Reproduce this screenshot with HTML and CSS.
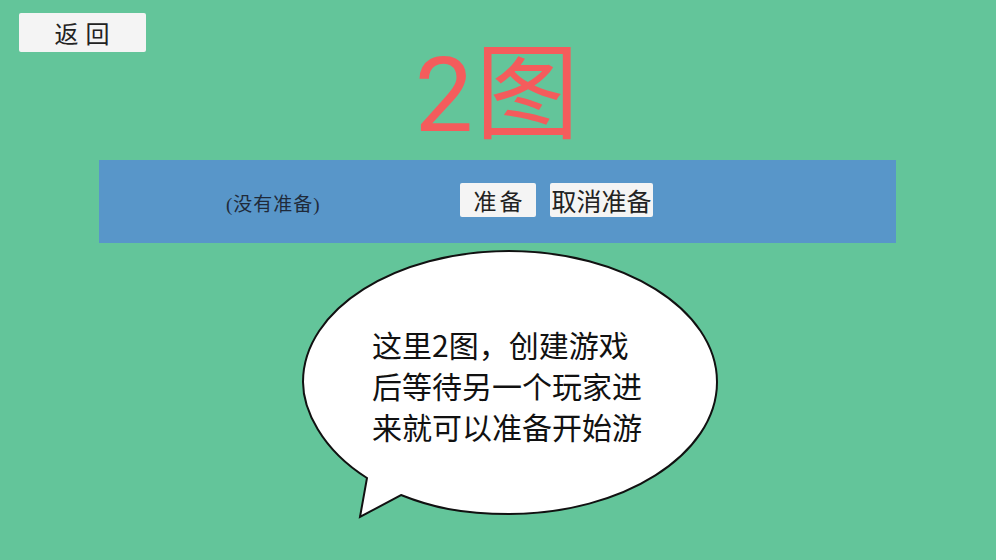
FILE: index.html
```html
<!DOCTYPE html>
<html lang="zh">
<head>
<meta charset="utf-8">
<link rel="stylesheet" href="styles.css">
</head>
<body>
<div class="page">
  <div class="topbar"><button class="back">返回</button></div>
  <h1 class="title">2图</h1>
  <div class="bar">
    <span class="status">(没有准备)</span>
    <button class="btn ready">准备</button>
    <button class="btn cancel">取消准备</button>
  </div>
  <div class="bubble-wrap">
    <svg class="bubble" width="430" height="280" viewBox="0 0 430 280">
      <path d="M66 229 C 20 200, 2 160, 2 133 C 2 60, 95 2, 208 2 C 321 2, 416 60, 416 133 C 416 206, 321 265, 208 265 C 160 265, 130 258, 100 246 L 59 268 Z" fill="#fff" stroke="#111" stroke-width="2" stroke-linejoin="miter"/>
    </svg>
    <p class="bubble-text">这里2图，创建游戏<br>后等待另一个玩家进<br>来就可以准备开始游</p>
  </div>
</div>
</body>
</html>
```
FILE: styles.css
```css
html, body {
  margin: 0;
  padding: 0;
}
body {
  background: #63c59a;
  width: 996px;
  height: 560px;
  overflow: hidden;
  font-family: "Noto Sans CJK SC", "Noto Sans", sans-serif;
}
.page {
  display: flex;
  flex-direction: column;
}
.topbar {
  padding: 13px 0 0 19px;
  height: 39px;
}
.back {
  width: 127px;
  height: 39px;
  border: none;
  border-radius: 2px;
  background: #f4f4f4;
  font-family: "Noto Sans CJK SC", serif;
  font-size: 24px;
  color: #222;
  padding: 0 0 0 6px;
  line-height: 39px;
  letter-spacing: 7px;
}
.title {
  margin: -10px 0 0 0;
  height: 118px;
  text-align: center;
  font-family: "Roboto", "Noto Sans CJK SC", sans-serif;
  font-weight: 400;
  font-size: 104px;
  line-height: 108px;
  color: #f45c5c;
  letter-spacing: 2px;
}
.bar {
  margin: 0 100px 0 99px;
  height: 83px;
  background: #5896c9;
  display: flex;
  align-items: center;
  padding-left: 127px;
}
.status {
  width: 234px;
  font-family: "Liberation Serif", "Noto Sans CJK SC", serif;
  font-size: 19px;
  letter-spacing: 1px;
  color: #1f2a3a;
  margin-top: 2px;
}
.btn {
  height: 34px;
  border: none;
  border-radius: 2px;
  background: #f4f4f4;
  color: #222;
  font-family: "Noto Sans CJK SC", serif;
  font-size: 23px;
  line-height: 34px;
  padding: 0;
  margin-top: -3px;
}
.ready {
  width: 76px;
  letter-spacing: 3px;
  padding-left: 3px;
}
.cancel {
  width: 103px;
  margin-left: 14px;
  font-size: 25px;
  letter-spacing: 0;
}
.bubble-wrap {
  position: relative;
  margin: 6px 0 0 301px;
  width: 430px;
  height: 280px;
}
.bubble {
  display: block;
}
.bubble-text {
  position: absolute;
  left: 71px;
  top: 75px;
  margin: 0;
  font-size: 30px;
  line-height: 41px;
  color: #111;
}
```
